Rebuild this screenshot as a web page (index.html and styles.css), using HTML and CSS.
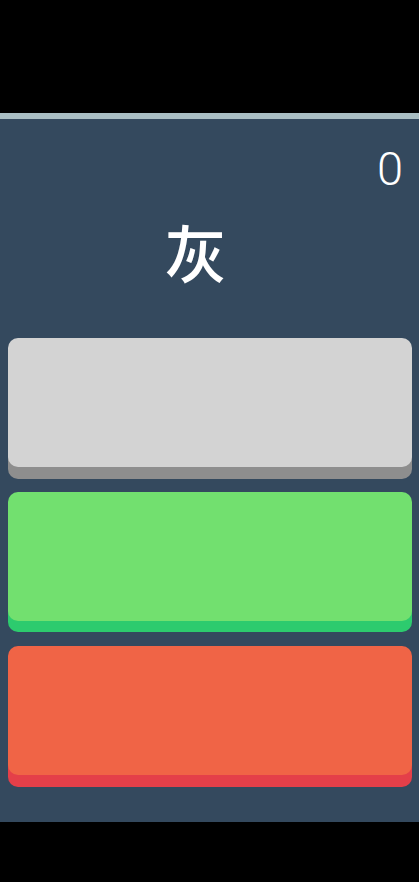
FILE: index.html
```html
<!DOCTYPE html>
<html lang="zh">
<head>
    <meta charset="UTF-8">
    <meta name="viewport" content="width=device-width, initial-scale=1.0">
    <title>颜色游戏</title>
    <link rel="stylesheet" href="styles.css">
</head>
<body>

<div class="top-bar"></div>

<div class="game">
    <div class="score">0</div>
    <div class="word">灰</div>

    <div class="choices">
        <div class="choice grey"></div>
        <div class="choice green"></div>
        <div class="choice red"></div>
    </div>
</div>

</body>
</html>
```

FILE: styles.css
```css
body {
    margin: 0;
    background-color: #000;
    font-family: Roboto, "Noto Sans CJK SC", sans-serif;
}
.top-bar {
    height: 113px;
    border-bottom: 6px solid #a9bec3;
    background-color: #000;
}
.game {
    height: 703px;
    background-color: #34495e;
    box-sizing: border-box;
    padding: 26px 0 0;
}
.score {
    text-align: right;
    padding-right: 16px;
    font-size: 47px;
    font-weight: 300;
    line-height: 1;
    color: #fff;
}
.word {
    text-align: center;
    padding-right: 28px;
    margin-top: 28px;
    font-family: "Noto Sans CJK SC", sans-serif;
    font-size: 62px;
    font-weight: 500;
    line-height: 1;
    color: #fff;
}
.choices {
    display: flex;
    flex-direction: column;
    gap: 25px;
    margin: 56px 7px 0 8px;
}
.choice {
    height: 129px;
    border-radius: 10px;
}
.grey {
    background-color: #d3d3d3;
    box-shadow: 0 12px 0 #8e8e8e;
}
.green {
    background-color: #72e06f;
    box-shadow: 0 11px 0 #2dcb6e;
}
.red {
    background-color: #f06446;
    box-shadow: 0 12px 0 #e43f49;
}
```
